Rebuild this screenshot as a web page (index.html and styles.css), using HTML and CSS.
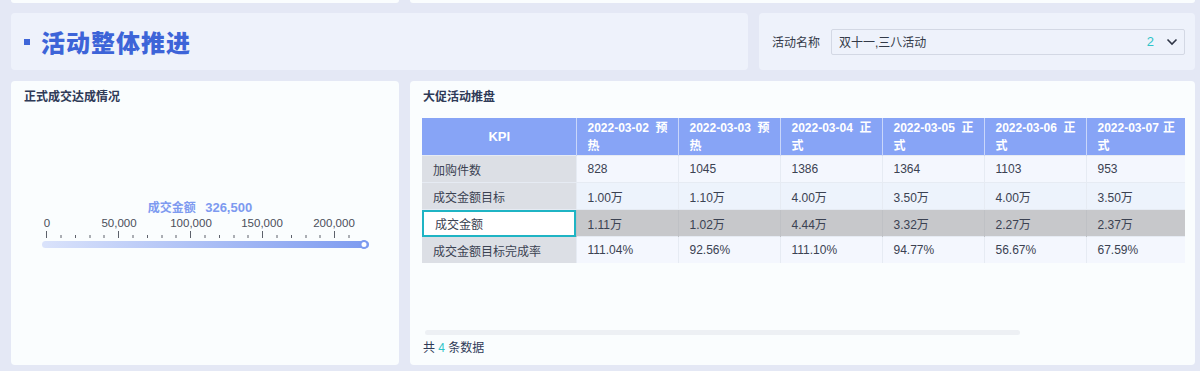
FILE: index.html
```html
<!DOCTYPE html>
<html lang="zh-CN">

<head>
    <meta charset="UTF-8">
    <meta name="viewport" content="width=device-width, initial-scale=1.0">
    <title>活动整体推进</title>
    <link rel="stylesheet" href="styles.css">
</head>

<body>
    <div class="page">
        <div class="topStrip">
            <div class="stripCard"></div>
            <div class="stripCard"></div>
        </div>

        <div class="headerRow">
            <div class="titleCard">
                <span class="titleMark"></span>
                <h1 class="pageTitle">活动整体推进</h1>
            </div>
            <div class="filterCard">
                <span class="filterLabel">活动名称</span>
                <div class="selectBox">
                    <span class="selectText">双十一,三八活动</span>
                    <span class="selectCount">2</span>
                    <svg class="selectArrow" width="12" height="8" viewBox="0 0 12 8">
                        <polyline points="1.5,1.5 6,6 10.5,1.5" fill="none" stroke="#2f3646" stroke-width="1.6" />
                    </svg>
                </div>
            </div>
        </div>

        <div class="contentRow">
            <div class="panel gaugePanel">
                <div class="panelTitle">正式成交达成情况</div>
                <svg class="gauge" width="388" height="56" viewBox="11 198 388 56">
                    <defs>
                        <linearGradient id="barFill" x1="0" x2="1" y1="0" y2="0">
                            <stop offset="0" stop-color="#dae3fb" />
                            <stop offset="1" stop-color="#7d9bf0" />
                        </linearGradient>
                    </defs>
                    <text x="200" y="212" text-anchor="middle" class="gaugeLabel">成交金额 <tspan dx="6" class="gaugeValue">326,500</tspan></text>
                    <g class="axisText" text-anchor="middle">
                        <text x="47" y="227">0</text>
                        <text x="119" y="227">50,000</text>
                        <text x="191" y="227">100,000</text>
                        <text x="262" y="227">150,000</text>
                        <text x="334" y="227">200,000</text>
                    </g>
                    <g stroke="#5d616b" stroke-width="1">
                        <line x1="46.5" y1="231" x2="46.5" y2="238" />
                        <line x1="61" y1="235" x2="61" y2="238" />
                        <line x1="75.5" y1="235" x2="75.5" y2="238" />
                        <line x1="90" y1="235" x2="90" y2="238" />
                        <line x1="104" y1="235" x2="104" y2="238" />
                        <line x1="118.5" y1="231" x2="118.5" y2="238" />
                        <line x1="133" y1="235" x2="133" y2="238" />
                        <line x1="147.5" y1="235" x2="147.5" y2="238" />
                        <line x1="162" y1="235" x2="162" y2="238" />
                        <line x1="176" y1="235" x2="176" y2="238" />
                        <line x1="190.5" y1="231" x2="190.5" y2="238" />
                        <line x1="205" y1="235" x2="205" y2="238" />
                        <line x1="219.5" y1="235" x2="219.5" y2="238" />
                        <line x1="234" y1="235" x2="234" y2="238" />
                        <line x1="248" y1="235" x2="248" y2="238" />
                        <line x1="262.5" y1="231" x2="262.5" y2="238" />
                        <line x1="277" y1="235" x2="277" y2="238" />
                        <line x1="291.5" y1="235" x2="291.5" y2="238" />
                        <line x1="306" y1="235" x2="306" y2="238" />
                        <line x1="320" y1="235" x2="320" y2="238" />
                        <line x1="334.5" y1="231" x2="334.5" y2="238" />
                        <line x1="349" y1="235" x2="349" y2="238" />
                    </g>
                    <rect x="42" y="241" width="327" height="7" rx="3.5" fill="url(#barFill)" />
                    <circle cx="364" cy="244.5" r="3.5" fill="#ffffff" stroke="#7d9bf0" stroke-width="2" />
                </svg>
            </div>

            <div class="panel tablePanel">
                <div class="panelTitle">大促活动推盘</div>
                <table class="kpiTable">
                    <colgroup>
                        <col style="width: 154px">
                        <col style="width: 102px">
                        <col style="width: 102px">
                        <col style="width: 102px">
                        <col style="width: 102px">
                        <col style="width: 102px">
                        <col style="width: 99px">
                    </colgroup>
                    <thead>
                        <tr>
                            <th class="kpiHead">KPI</th>
                            <th>2022-03-02 预热</th>
                            <th>2022-03-03 预热</th>
                            <th>2022-03-04 正式</th>
                            <th>2022-03-05 正式</th>
                            <th>2022-03-06 正式</th>
                            <th>2022-03-07 正式</th>
                        </tr>
                    </thead>
                    <tbody>
                        <tr class="rowA">
                            <td class="kpiCell">加购件数</td>
                            <td>828</td><td>1045</td><td>1386</td><td>1364</td><td>1103</td><td>953</td>
                        </tr>
                        <tr class="rowB">
                            <td class="kpiCell">成交金额目标</td>
                            <td>1.00万</td><td>1.10万</td><td>4.00万</td><td>3.50万</td><td>4.00万</td><td>3.50万</td>
                        </tr>
                        <tr class="rowActive">
                            <td class="kpiCell selected">成交金额</td>
                            <td>1.11万</td><td>1.02万</td><td>4.44万</td><td>3.32万</td><td>2.27万</td><td>2.37万</td>
                        </tr>
                        <tr class="rowA">
                            <td class="kpiCell">成交金额目标完成率</td>
                            <td>111.04%</td><td>92.56%</td><td>111.10%</td><td>94.77%</td><td>56.67%</td><td>67.59%</td>
                        </tr>
                    </tbody>
                </table>
                <div class="scrollTrack"></div>
                <div class="tableFooter">共 <span class="count">4</span> 条数据</div>
            </div>
        </div>
    </div>
</body>

</html>
```

FILE: styles.css
```css
body {
    margin: 0;
    background-color: #e4e8f5;
    font-family: 'Liberation Sans', 'Noto Sans CJK SC', sans-serif;
    color: #3b4252;
}

.page {
    padding: 0 5px 0 11px;
    height: 371px;
    box-sizing: border-box;
}

.topStrip {
    display: grid;
    grid-template-columns: 388px 785px;
    gap: 11px;
    height: 3px;
}

.stripCard {
    background-color: #fafdfe;
    border-radius: 0 0 4px 4px;
}

.headerRow {
    display: grid;
    grid-template-columns: 737px 436px;
    gap: 11px;
    margin-top: 10px;
    height: 57px;
}

.titleCard,
.filterCard {
    background-color: #eef2fb;
    border-radius: 4px;
    display: flex;
    align-items: center;
}

.titleCard {
    padding-left: 13px;
}

.titleMark {
    width: 6px;
    height: 6px;
    background-color: #3f66d8;
    margin-right: 11px;
}

.pageTitle {
    margin: 0;
    font-family: 'Noto Sans CJK SC', sans-serif;
    font-size: 24px;
    font-weight: 900;
    color: #3d64d8;
    letter-spacing: 1px;
}

.filterCard {
    padding: 0 10px 0 13px;
}

.filterLabel {
    font-size: 12px;
    color: #333a48;
    width: 59px;
}

.selectBox {
    flex: 1;
    height: 26px;
    box-sizing: border-box;
    border: 1px solid #d3d8e4;
    border-radius: 2px;
    display: flex;
    align-items: center;
    padding: 0 6px 0 7px;
    font-size: 12px;
}

.selectText {
    flex: 1;
    color: #333a48;
}

.selectCount {
    color: #2fc4c8;
    font-size: 13px;
    margin-right: 12px;
}

.contentRow {
    display: grid;
    grid-template-columns: 388px 785px;
    gap: 11px;
    margin-top: 11px;
    height: 284px;
}

.panel {
    background-color: #fafdfe;
    border-radius: 4px;
}

.panelTitle {
    font-size: 12px;
    font-weight: bold;
    color: #2f3a57;
    line-height: 16px;
    padding: 8px 0 0 13px;
}

.gauge {
    display: block;
    margin-top: 93px;
}

.gaugeLabel {
    font-size: 12px;
    font-weight: bold;
    fill: #7d9af0;
}

.gaugeValue {
    font-size: 13px;
}

.axisText {
    font-size: 11.5px;
    fill: #4a4f5a;
}

.tablePanel {
    padding: 0 0 0 12px;
}

.tablePanel .panelTitle {
    padding-left: 1px;
}

.kpiTable {
    margin-top: 13px;
    border-collapse: collapse;
    table-layout: fixed;
    width: 763px;
    font-size: 12px;
}

.kpiTable th {
    background-color: #87a4f6;
    color: #ffffff;
    font-weight: bold;
    text-align: justify;
    line-height: 18px;
    padding: 1px 10px 0 11px;
    height: 37px;
    box-sizing: border-box;
    border-left: 1px solid #c9d6fa;
}

.kpiTable th.kpiHead {
    text-align: center;
    border-left: none;
    font-size: 13px;
}

.kpiTable td {
    height: 26px;
    padding: 0 0 0 11px;
    border-left: 1px solid #e6ebf3;
    border-top: 1px solid #e6ebf3;
    color: #3b4252;
}

.rowA td {
    background-color: #f4f7fe;
}

.rowB td {
    background-color: #edf3fc;
}

.rowActive td {
    background-color: #c7c8cb;
    border-left-color: #bfc1c5;
}

.kpiTable td.kpiCell {
    background-color: #dcdfe5;
    border-left: none;
}

.kpiTable td.selected {
    background-color: #ffffff;
    outline: 2px solid #1fb4c4;
    outline-offset: -2px;
    padding-left: 13px;
}

.scrollTrack {
    width: 595px;
    height: 5px;
    margin: 67px 0 0 3px;
    background-color: #edf0f4;
    border-radius: 3px;
}

.tableFooter {
    margin-top: 3px;
    font-size: 12px;
    color: #2f3a57;
    padding-left: 1px;
}

.count {
    color: #2fc4c8;
}
```
